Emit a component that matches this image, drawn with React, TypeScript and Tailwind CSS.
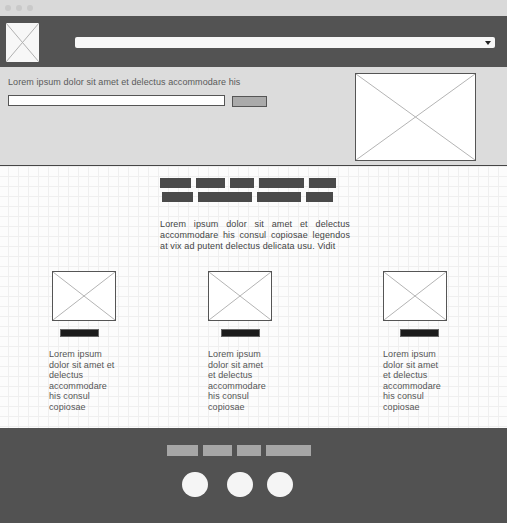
import React from 'react';

// заглушка картинки: прямоугольник с крестом
function Placeholder({ className, line = '#b4b4b4' }: { className: string; line?: string }) {
  return (
    <div className={className}>
      <svg width="100%" height="100%" preserveAspectRatio="none" viewBox="0 0 100 100" className="block">
        <line x1="0" y1="0" x2="100" y2="100" stroke={line} strokeWidth="1" vectorEffect="non-scaling-stroke" />
        <line x1="100" y1="0" x2="0" y2="100" stroke={line} strokeWidth="1" vectorEffect="non-scaling-stroke" />
      </svg>
    </div>
  );
}

const navTop = ['w-[31px]', 'w-[29px]', 'w-[24px]', 'w-[45px]', 'w-[27px]'];
const navBottom = ['w-[31px]', 'w-[54px]', 'w-[44px]', 'w-[27px]'];

const cards = [
  { box: 'w-[159px]', img: 'ml-[3px]', bar: 'ml-[11px]', text: 'w-[70px]', copy: 'Lorem ipsum dolor sit amet et delectus accommodare his consul copiosae' },
  { box: 'w-[175px]', img: 'ml-0', bar: 'ml-[13px]', text: 'w-[62px]', copy: 'Lorem ipsum dolor sit amet et delectus accommodare his consul copiosae' },
  { box: 'w-[80px]', img: 'ml-0', bar: 'ml-[17px]', text: 'w-[62px]', copy: 'Lorem ipsum dolor sit amet et delectus accommodare his consul copiosae' },
];

export default function App() {
  return (
    <div className="flex h-[523px] w-[507px] flex-col overflow-hidden font-['Liberation_Sans',Arial,sans-serif]">
      {/* полоска окна браузера */}
      <div className="flex h-[16px] shrink-0 items-center gap-[5px] bg-[#d9d9d9] pl-[5px]">
        <span className="h-[6px] w-[6px] rounded-full bg-[#c9c9c9]" />
        <span className="h-[6px] w-[6px] rounded-full bg-[#c9c9c9]" />
        <span className="h-[6px] w-[6px] rounded-full bg-[#c9c9c9]" />
      </div>

      {/* шапка */}
      <header className="flex h-[51px] shrink-0 items-center bg-[#535353] pt-[2px]">
        <Placeholder className="ml-[6px] h-[39px] w-[33px] bg-[#f7f7f7]" line="#b0b0b0" />
        <div className="ml-[36px] flex h-[11px] w-[420px] items-center justify-end rounded-[2px] bg-[#f7f7f7] pr-[4px]">
          <span className="h-0 w-0 border-x-[3px] border-t-[4px] border-x-transparent border-t-[#222]" />
        </div>
      </header>

      {/* промо-блок */}
      <section className="flex h-[99px] shrink-0 border-b border-[#454545] bg-[#dcdcdc]">
        <div className="flex-1 pl-[8px] pt-[10px]">
          <p className="text-[9px] leading-[11px] tracking-[0.08px] text-[#5a5a5a]">
            Lorem ipsum dolor sit amet et delectus accommodare his
          </p>
          <div className="mt-[7px] flex items-start">
            <div className="h-[11px] w-[217px] border border-[#555] bg-white" />
            <div className="ml-[7px] mt-[1px] h-[11px] w-[35px] border border-[#555] bg-[#aaaaaa]" />
          </div>
        </div>
        <Placeholder className="mr-[31px] mt-[6px] h-[88px] w-[121px] border border-[#555] bg-white" line="#b4b4b4" />
      </section>

      {/* основная часть на сетке */}
      <main className="flex-1 bg-[#fcfcfc] bg-[image:linear-gradient(to_right,#efefef_1px,transparent_1px),linear-gradient(to_bottom,#efefef_1px,transparent_1px)] bg-[length:10px_10px] bg-[position:8px_0px]">
        <div className="flex flex-col pl-[160px] pt-[12px]">
          <div className="flex gap-[5px]">
            {navTop.map((w, i) => (
              <span key={i} className={`h-[10px] bg-[#4a4a4a] ${w}`} />
            ))}
          </div>
          <div className="ml-[2px] mt-[4px] flex gap-[5px]">
            {navBottom.map((w, i) => (
              <span key={i} className={`h-[10px] bg-[#4a4a4a] ${w}`} />
            ))}
          </div>
          <p className="mt-[17px] w-[190px] text-justify text-[9px] leading-[11px] tracking-[0.12px] text-[#444]">
            Lorem ipsum dolor sit amet et delectus accommodare his consul copiosae legendos at vix ad putent delectus
            delicata usu. Vidit
          </p>
        </div>

        <div className="mt-[19px] flex pl-[49px]">
          {cards.map((c, i) => (
            <div key={i} className={`flex shrink-0 flex-col ${c.box}`}>
              <Placeholder className={`h-[50px] w-[64px] border border-[#555] bg-white ${c.img}`} line="#b4b4b4" />
              <div className={`mt-[8px] h-[8px] w-[39px] border border-[#666] bg-[#1c1c1c] ${c.bar}`} />
              <p className={`mt-[12px] text-[9px] leading-[10.5px] tracking-[0.08px] text-[#555] ${c.text}`}>{c.copy}</p>
            </div>
          ))}
        </div>
      </main>

      {/* подвал */}
      <footer className="h-[95px] shrink-0 bg-[#525252] pt-[17px]">
        <div className="flex gap-[5px] pl-[167px]">
          <span className="h-[11px] w-[31px] bg-[#a6a6a6]" />
          <span className="h-[11px] w-[29px] bg-[#a6a6a6]" />
          <span className="h-[11px] w-[24px] bg-[#a6a6a6]" />
          <span className="h-[11px] w-[45px] bg-[#a6a6a6]" />
        </div>
        <div className="mt-[16px] flex pl-[182px]">
          <span className="h-[25px] w-[26px] rounded-full bg-[#f5f5f5]" />
          <span className="ml-[19px] h-[25px] w-[26px] rounded-full bg-[#f5f5f5]" />
          <span className="ml-[14px] h-[25px] w-[26px] rounded-full bg-[#f5f5f5]" />
        </div>
      </footer>
    </div>
  );
}
